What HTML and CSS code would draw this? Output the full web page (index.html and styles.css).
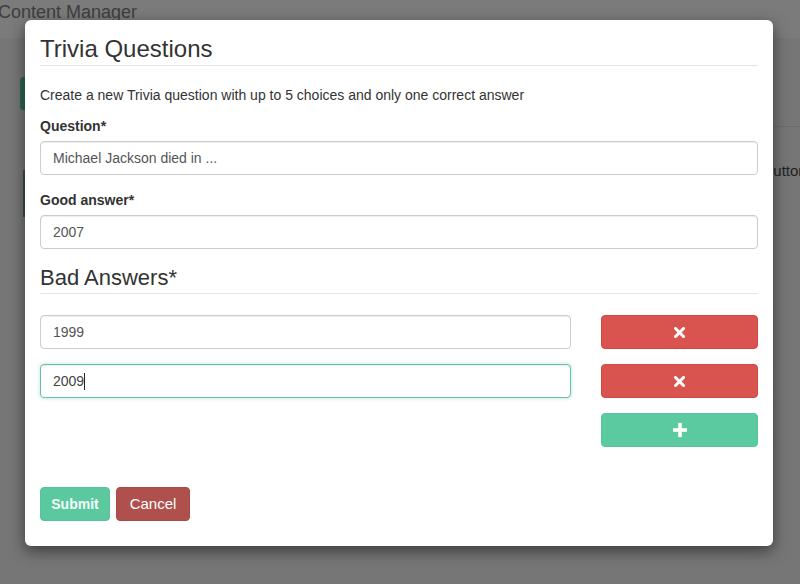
FILE: index.html
```html
<!DOCTYPE html>
<html lang="en">
<head>
<meta charset="utf-8">
<title>Content Manager</title>
<link rel="stylesheet" href="styles.css">
</head>
<body>
<div class="page">
  <header class="navbar"><span class="brand">Content Manager</span></header>
  <main class="content">
    <div class="left">
      <span class="btn-bg"></span>
      <span class="panel-bg"></span>
    </div>
    <div class="right">
      <span class="right-text">button</span>
    </div>
  </main>
</div>

<div class="modal">
  <div class="modal-header">
    <h4 class="modal-title">Trivia Questions</h4>
  </div>
  <div class="modal-body">
    <p class="intro">Create a new Trivia question with up to 5 choices and only one correct answer</p>
    <div class="form-group">
      <label class="label">Question*</label>
      <div class="field">Michael Jackson died in ...</div>
    </div>
    <div class="form-group">
      <label class="label">Good answer*</label>
      <div class="field">2007</div>
    </div>
    <h3 class="section-title">Bad Answers*</h3>
    <div class="answers">
      <div class="field">1999</div>
      <button class="btn btn-danger btn-block" type="button" aria-label="Remove">
        <svg width="11" height="11" viewBox="0 0 11 11"><path d="M1.5 1.5L9.5 9.5M9.5 1.5L1.5 9.5" stroke="#fff" stroke-width="3" stroke-linecap="square"/></svg>
      </button>
      <div class="field focused">2009<span class="caret"></span></div>
      <button class="btn btn-danger btn-block" type="button" aria-label="Remove">
        <svg width="11" height="11" viewBox="0 0 11 11"><path d="M1.5 1.5L9.5 9.5M9.5 1.5L1.5 9.5" stroke="#fff" stroke-width="3" stroke-linecap="square"/></svg>
      </button>
      <span class="spacer"></span>
      <button class="btn btn-success btn-block" type="button" aria-label="Add">
        <svg width="14" height="14" viewBox="0 0 14 14"><rect x="5.2" y="0" width="3.6" height="14" fill="#fff"/><rect x="0" y="5.2" width="14" height="3.6" fill="#fff"/></svg>
      </button>
    </div>
    <div class="footer-actions">
      <button class="btn btn-submit" type="button">Submit</button>
      <button class="btn btn-cancel" type="button">Cancel</button>
    </div>
  </div>
</div>
</body>
</html>
```
FILE: styles.css
```css
* { box-sizing: border-box; }

html, body {
  margin: 0;
  padding: 0;
}

body {
  width: 800px;
  height: 584px;
  overflow: hidden;
  background: #767676;
  font-family: "Liberation Sans", Arial, sans-serif;
  font-size: 14px;
  line-height: 20px;
  color: #333;
  position: relative;
}

/* dimmed page behind the dialog */
.page {
  height: 584px;
}

.navbar {
  height: 38px;
  background: #7b7b7b;
  padding-top: 2px;
}

.brand {
  display: block;
  margin-left: -2px;
  font-size: 18px;
  line-height: 20px;
  color: #3e3e3e;
}

.content {
  display: flex;
  padding-left: 20px;
}

.left {
  display: flex;
  flex-direction: column;
  width: 60px;
}

.btn-bg {
  display: block;
  margin-top: 39px;
  height: 33px;
  width: 60px;
  border-radius: 4px;
  background: #2b6650;
}

.panel-bg {
  display: block;
  margin-top: 60px;
  margin-left: 3px;
  height: 47px;
  width: 20px;
  border-left: 2px solid #3b4f47;
}

.right {
  margin-left: auto;
  width: 60px;
  margin-top: 88px;
  border-top: 1px solid #6c6c6c;
  padding-top: 34px;
  padding-left: 25px;
}

.right-text {
  color: #1f1f1f;
  font-size: 15px;
  white-space: nowrap;
}

/* dialog */
.modal {
  position: absolute;
  left: 25px;
  top: 20px;
  width: 748px;
  height: 526px;
  background: #fff;
  border-radius: 6px;
  box-shadow: 0 5px 15px rgba(0, 0, 0, 0.5);
}

.modal-header {
  padding: 16px 15px 0;
}

.modal-title {
  margin: 0;
  font-size: 24px;
  line-height: 26px;
  font-weight: normal;
  color: #333;
  padding-bottom: 3px;
  border-bottom: 1px solid #e5e5e5;
}

.modal-body {
  padding: 0 15px;
}

.intro {
  margin: 19px 0 11px;
  color: #333;
}

.form-group {
  display: flex;
  flex-direction: column;
  margin-bottom: 15px;
}

.label {
  font-weight: bold;
  margin-bottom: 5px;
}

.field {
  height: 34px;
  padding: 6px 12px;
  border: 1px solid #ccc;
  border-radius: 4px;
  color: #555;
  background: #fff;
  box-shadow: inset 0 1px 1px rgba(0, 0, 0, 0.075);
  white-space: nowrap;
}

.field.focused {
  border-color: #64c1ae;
  box-shadow: inset 0 1px 1px rgba(0, 0, 0, 0.075), 0 0 4px rgba(100, 193, 174, 0.45);
  color: #444;
}

.caret {
  display: inline-block;
  width: 1px;
  height: 17px;
  background: #222;
  vertical-align: -4px;
}

.section-title {
  margin: 17px 0 21px;
  font-size: 22px;
  line-height: 24px;
  font-weight: normal;
  color: #333;
  padding-bottom: 3px;
  border-bottom: 1px solid #e5e5e5;
}

.answers {
  display: grid;
  grid-template-columns: 531px 157px;
  column-gap: 30px;
  row-gap: 15px;
}

.btn {
  height: 34px;
  border: 1px solid transparent;
  border-radius: 4px;
  font-family: inherit;
  font-size: 14px;
  line-height: 20px;
  color: #fff;
  padding: 6px 12px;
  cursor: pointer;
}

.btn-block {
  display: flex;
  align-items: center;
  justify-content: center;
  width: 100%;
  padding: 0;
}

.btn-danger {
  background: #d9534f;
  border-color: #d24844;
}

.btn-success {
  background: #5ccaa0;
  border-color: #57c59b;
}

.footer-actions {
  display: flex;
  gap: 6px;
  margin-top: 40px;
}

.btn-submit {
  width: 70px;
  background: #5bc8a0;
  border-color: #57c49b;
  color: #f4fff9;
  font-weight: bold;
  padding: 0;
}

.btn-cancel {
  width: 74px;
  background: #b0504c;
  border-color: #a94a46;
  font-size: 15px;
  padding: 0;
}
```
